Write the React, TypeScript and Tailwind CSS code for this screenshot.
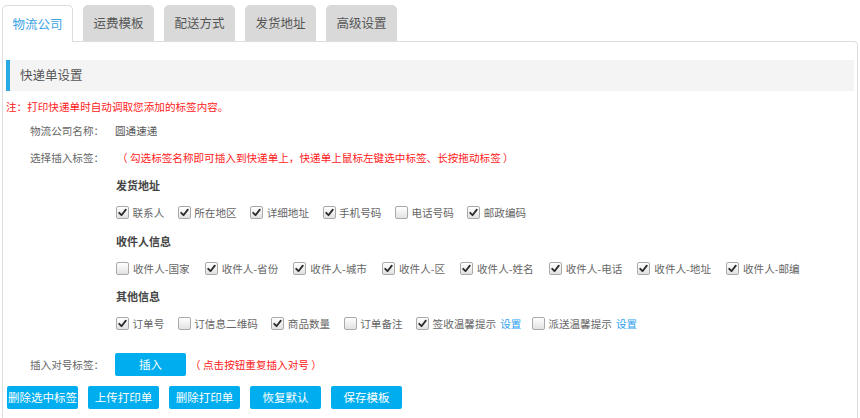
import { useState } from "react";

const FONT = { fontFamily: '"Microsoft YaHei", "Noto Sans CJK SC", "Noto Sans", sans-serif' };

const tabs = ["物流公司", "运费模板", "配送方式", "发货地址", "高级设置"];

type Item = { label: string; checked: boolean; link?: boolean };

const groups: { title: string; items: Item[] }[] = [
  {
    title: "发货地址",
    items: [
      { label: "联系人", checked: true },
      { label: "所在地区", checked: true },
      { label: "详细地址", checked: true },
      { label: "手机号码", checked: true },
      { label: "电话号码", checked: false },
      { label: "邮政编码", checked: true },
    ],
  },
  {
    title: "收件人信息",
    items: [
      { label: "收件人-国家", checked: false },
      { label: "收件人-省份", checked: true },
      { label: "收件人-城市", checked: true },
      { label: "收件人-区", checked: true },
      { label: "收件人-姓名", checked: true },
      { label: "收件人-电话", checked: true },
      { label: "收件人-地址", checked: true },
      { label: "收件人-邮编", checked: true },
    ],
  },
  {
    title: "其他信息",
    items: [
      { label: "订单号", checked: true },
      { label: "订信息二维码", checked: false },
      { label: "商品数量", checked: true },
      { label: "订单备注", checked: false },
      { label: "签收温馨提示", checked: true, link: true },
      { label: "派送温馨提示", checked: false, link: true },
    ],
  },
];

function Box({ checked, onClick }: { checked: boolean; onClick: () => void }) {
  return (
    <span
      onClick={onClick}
      className="w-[13px] h-[13px] shrink-0 rounded-[2px] border border-[#a9a9a9] bg-gradient-to-b from-[#ffffff] to-[#e2e2e2] flex items-center justify-center cursor-pointer"
    >
      {checked && (
        <svg width="9" height="9" viewBox="0 0 9 9">
          <path d="M1.2 4.8 L3.5 7.2 L7.8 1.6" fill="none" stroke="#2b2b2b" strokeWidth="1.8" strokeLinecap="round" strokeLinejoin="round" />
        </svg>
      )}
    </span>
  );
}

function BlueButton({ children, className = "" }: { children: React.ReactNode; className?: string }) {
  return (
    <button className={`w-[71px] h-[23px] rounded-[2px] bg-[#00aeef] text-white text-[11.5px] flex items-center justify-center whitespace-nowrap ${className}`}>
      {children}
    </button>
  );
}

export default function App() {
  const [active, setActive] = useState(0);
  const [checks, setChecks] = useState(groups.map((g) => g.items.map((i) => i.checked)));

  function toggle(gi: number, ii: number) {
    setChecks((prev) => prev.map((row, r) => (r === gi ? row.map((v, c) => (c === ii ? !v : v)) : row)));
  }

  return (
    <div className="w-[860px] h-[418px] bg-white overflow-hidden" style={FONT}>
      <div className="flex gap-[10px] pl-[2px] pt-[5px] h-[41px] items-end">
        {tabs.map((t, i) => (
          <div
            key={t}
            onClick={() => setActive(i)}
            className={
              i === active
                ? "w-[71px] h-[37px] -mb-px relative z-10 rounded-t-[5px] border border-b-0 border-[#dddddd] bg-white text-[#3ba4e6] text-[12.5px] flex items-center justify-center cursor-pointer"
                : "w-[71px] h-[36px] rounded-t-[5px] bg-[#d9d9d9] text-[#555555] text-[12.5px] flex items-center justify-center cursor-pointer"
            }
          >
            {t}
          </div>
        ))}
      </div>

      <div className="ml-[2px] mr-[2px] h-[378px] border border-[#dddddd] rounded-tr-[4px] px-[3px] pt-[18px]">
        <div className="h-[31px] bg-[#f4f4f4] border-l-[4px] border-[#29aae3] flex items-center pl-[10px] text-[12.5px] text-[#555555]">
          快递单设置
        </div>

        <div className="mt-[6px] h-[20px] flex items-center text-[10.6px] text-[#ff2020]">
          注：打印快递单时自动调取您添加的标签内容。
        </div>

        <div className="pl-[24px] text-[10.6px] text-[#666666]">
          <div className="h-[28px] flex items-center">
            <span className="w-[85px]">物流公司名称：</span>
            <span className="text-[#555555]">圆通速递</span>
          </div>
          <div className="h-[26px] flex items-center">
            <span className="w-[87px]">选择插入标签：</span>
            <span className="text-[#ff2020]">（ 勾选标签名称即可插入到快递单上，快递单上鼠标左键选中标签、长按拖动标签 ）</span>
          </div>

          <div className="pl-[86px]">
            {groups.map((g, gi) => (
              <div key={g.title}>
                <div className="h-[28px] flex items-center font-bold text-[#444444] text-[11px]">{g.title}</div>
                <div className={`${gi === 1 ? "h-[27px]" : "h-[28px]"} flex items-center`}>
                  {g.items.map((it, ii) => (
                    <label
                      key={it.label}
                      className={`flex items-center whitespace-nowrap ${gi === 1 ? "mr-[15px]" : "mr-[13.5px]"}`}
                    >
                      <Box checked={checks[gi][ii]} onClick={() => toggle(gi, ii)} />
                      <span className={gi === 1 ? "ml-[4px]" : "ml-[3.5px]"}>{it.label}</span>
                      {it.link && <a className="ml-[4px] -mr-[3px] text-[#2e9ff0] cursor-pointer">设置</a>}
                    </label>
                  ))}
                </div>
              </div>
            ))}
          </div>

          <div className="mt-[15px] h-[23px] flex items-center">
            <span className="w-[85px]">插入对号标签：</span>
            <BlueButton>插入</BlueButton>
            <span className="ml-[4px] text-[#ff2020]">（ 点击按钮重复插入对号 ）</span>
          </div>
        </div>

        <div className="mt-[10px] flex gap-[10px] pl-px">
          <BlueButton>删除选中标签</BlueButton>
          <BlueButton>上传打印单</BlueButton>
          <BlueButton>删除打印单</BlueButton>
          <BlueButton>恢复默认</BlueButton>
          <BlueButton>保存模板</BlueButton>
        </div>
      </div>
    </div>
  );
}
